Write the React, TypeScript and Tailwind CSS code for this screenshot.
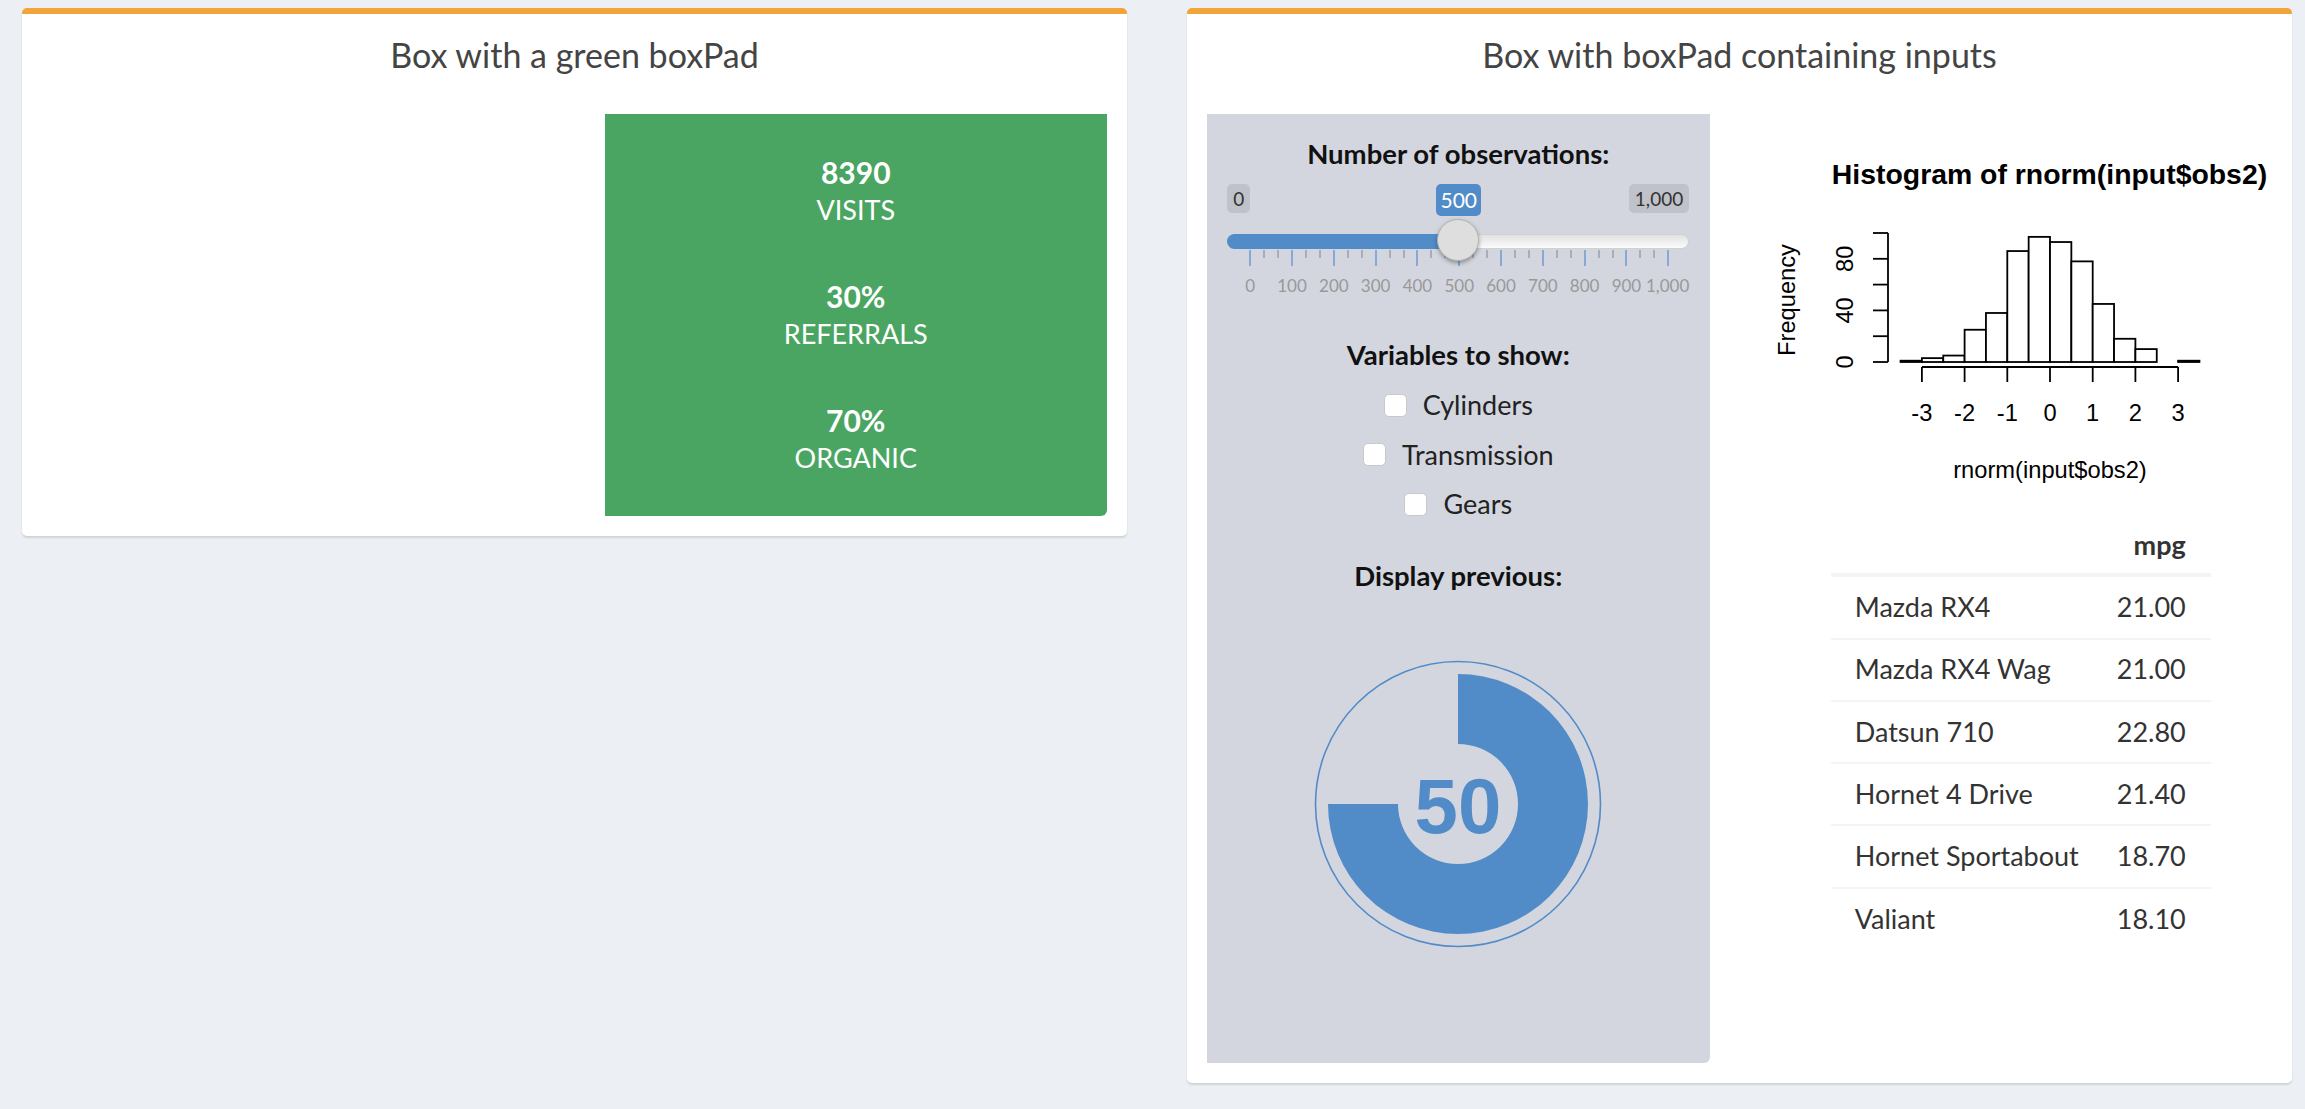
import React from "react";

const BLUE = "#528cc8";

const stats = [
  { v: "8390", l: "Visits" },
  { v: "30%", l: "Referrals" },
  { v: "70%", l: "Organic" },
];

const rows: [string, string][] = [
  ["Mazda RX4", "21.00"],
  ["Mazda RX4 Wag", "21.00"],
  ["Datsun 710", "22.80"],
  ["Hornet 4 Drive", "21.40"],
  ["Hornet Sportabout", "18.70"],
  ["Valiant", "18.10"],
];

const counts = [1, 3, 5, 25, 38, 86, 97, 93, 78, 45, 18, 10, 0, 1];

function Slider() {
  const x0 = 23;
  const step = 41.8;
  const majors = Array.from({ length: 11 }, (_, i) => i);
  const minors: number[] = [];
  for (let i = 0; i < 10; i++) {
    minors.push(x0 + i * step + step / 3, x0 + i * step + (2 * step) / 3);
  }
  return (
    <div className="relative w-[462px] h-[136px] shrink-0">
      <div className="absolute left-0 top-[10px] h-[29px] px-[6px] rounded-[5px] bg-[#bfc2c9] text-[#333] text-[19px] leading-[29px]">0</div>
      <div className="absolute left-[209px] top-[10px] h-[32px] w-[45px] rounded-[5px] bg-[#528cc8] text-white text-[21px] leading-[32px] text-center">500</div>
      <div className="absolute right-0 top-[10px] h-[29px] px-[6px] rounded-[5px] bg-[#bfc2c9] text-[#333] text-[19px] leading-[29px]">1,000</div>
      <div className="absolute left-0 right-0 top-[60px] h-[15px] rounded-full bg-gradient-to-b from-[#e2e2e2] to-[#fbfbfb] border border-[#d0d0d0]" />
      <div className="absolute left-0 w-[232px] top-[60px] h-[15px] rounded-l-full bg-[#528cc8]" />
      {minors.map((x, i) => (
        <div key={"m" + i} className="absolute top-[76px] h-[8px] w-[2px] bg-[#a9adb6]" style={{ left: x - 1 }} />
      ))}
      {majors.map((i) => (
        <div key={"M" + i} className="absolute top-[76px] h-[16px] w-[2px] bg-[#86a9d6]" style={{ left: x0 + i * step - 1 }} />
      ))}
      {majors.map((i) =>
        i === 10 ? (
          <div key={"t" + i} className="absolute right-0 top-[100px] text-[17px] leading-[24px] text-[#999]">1,000</div>
        ) : (
          <div key={"t" + i} className="absolute top-[100px] w-[60px] -ml-[30px] text-center text-[17px] leading-[24px] text-[#999]" style={{ left: x0 + i * step }}>
            {i * 100}
          </div>
        )
      )}
      <div className="absolute left-[210px] top-[45px] w-[42px] h-[42px] rounded-full bg-[#dedede] border border-[#b5b5b5] shadow-[0_2px_4px_rgba(0,0,0,0.35)]" />
    </div>
  );
}

function CheckRow({ label }: { label: string }) {
  return (
    <div className="h-[49.5px] flex items-center justify-center gap-[16px]">
      <div className="w-[23px] h-[23px] rounded-[5px] bg-white border border-[#c9c9c9]" />
      <span className="text-[27px] text-[#222]">{label}</span>
    </div>
  );
}

function Knob() {
  const c = 145;
  return (
    <svg width="290" height="290" viewBox="0 0 290 290" className="shrink-0">
      <circle cx={c} cy={c} r={142.5} fill="none" stroke={BLUE} strokeWidth={1.6} />
      <path
        d={`M ${c} ${c - 130} A 130 130 0 1 1 ${c - 130} ${c} L ${c - 60} ${c} A 60 60 0 1 0 ${c} ${c - 60} Z`}
        fill={BLUE}
      />
      <text x={c} y={c + 2} textAnchor="middle" dominantBaseline="central" fontFamily="'Liberation Sans', Arial, sans-serif" fontWeight="bold" fontSize="78" fill={BLUE}>
        50
      </text>
    </svg>
  );
}

function Histogram() {
  const X = (v: number) => 280 + v * 42.7;
  const Y = (n: number) => 248 - n * 1.29;
  const ff = "'Liberation Sans', Arial, sans-serif";
  return (
    <svg width="502" height="403" viewBox="0 0 502 403" className="block">
      <text x={279.5} y={70} textAnchor="middle" fontFamily={ff} fontWeight="bold" fontSize="28.4" fill="#000">
        Histogram of rnorm(input$obs2)
      </text>
      {counts.map((n, i) => {
        const a = -3.5 + i * 0.5;
        if (n === 0) return null;
        return (
          <rect key={i} x={X(a)} y={Y(n)} width={42.7 / 2} height={248 - Y(n)} fill="#fff" stroke="#000" strokeWidth={1.8} />
        );
      })}
      <line x1={118} y1={Y(0)} x2={118} y2={Y(100)} stroke="#000" strokeWidth={1.8} />
      {[0, 20, 40, 60, 80, 100].map((t) => (
        <line key={t} x1={103} y1={Y(t)} x2={118} y2={Y(t)} stroke="#000" strokeWidth={1.8} />
      ))}
      {[0, 40, 80].map((t) => (
        <text key={t} x={0} y={0} transform={`translate(83 ${Y(t)}) rotate(-90)`} textAnchor="middle" fontFamily={ff} fontSize="23.7" fill="#000">
          {t}
        </text>
      ))}
      <line x1={X(-3)} y1={253} x2={X(3)} y2={253} stroke="#000" strokeWidth={1.8} />
      {[-3, -2, -1, 0, 1, 2, 3].map((t) => (
        <g key={t}>
          <line x1={X(t)} y1={253} x2={X(t)} y2={268} stroke="#000" strokeWidth={1.8} />
          <text x={X(t)} y={306.5} textAnchor="middle" fontFamily={ff} fontSize="23.7" fill="#000">
            {t}
          </text>
        </g>
      ))}
      <text x={280} y={364} textAnchor="middle" fontFamily={ff} fontSize="23.7" fill="#000">
        rnorm(input$obs2)
      </text>
      <text x={0} y={0} transform={`translate(25 186) rotate(-90)`} textAnchor="middle" fontFamily={ff} fontSize="23.7" fill="#000">
        Frequency
      </text>
    </svg>
  );
}

function Box({ title, children }: { title: string; children: React.ReactNode }) {
  return (
    <div className="w-[1105px] bg-white rounded-[5px] border-t-[6px] border-[#f0a43a] shadow-[0_2px_2px_rgba(0,0,0,0.12)]">
      <div className="h-[80px] flex items-center justify-center text-[34px] text-[#444]">{title}</div>
      <div className="px-[20px] pt-[20px] pb-[20px] grid grid-cols-2 gap-x-[60px]">{children}</div>
    </div>
  );
}

export default function App() {
  return (
    <div className="min-h-screen w-full bg-[#ecf0f5] font-['Lato',sans-serif]">
      <div className="flex items-start gap-[60px] pl-[22px] pt-[8px]">
        <Box title="Box with a green boxPad">
          <div />
          <div className="h-[402px] bg-[#4aa563] rounded-br-[6px] pt-[40px] flex flex-col items-center gap-[50px] text-white">
            {stats.map((s) => (
              <div key={s.v} className="flex flex-col items-center">
                <div className="h-[37px] leading-[37px] text-[30px] font-bold">{s.v}</div>
                <div className="h-[37px] leading-[37px] text-[27px] uppercase">{s.l}</div>
              </div>
            ))}
          </div>
        </Box>
        <Box title="Box with boxPad containing inputs">
          <div className="h-[949px] bg-[#d3d6de] rounded-br-[6px] pt-[20px] flex flex-col items-center">
            <div className="h-[40px] leading-[40px] text-[27.5px] font-bold text-[#111]">Number of observations:</div>
            <Slider />
            <div className="mt-[25px] h-[40px] leading-[40px] text-[27.5px] font-bold text-[#111]">Variables to show:</div>
            <div className="mt-[5.5px] flex flex-col">
              <CheckRow label="Cylinders" />
              <CheckRow label="Transmission" />
              <CheckRow label="Gears" />
            </div>
            <div className="mt-[27px] h-[40px] leading-[40px] text-[27.5px] font-bold text-[#111]">Display previous:</div>
            <div className="mt-[62.5px]">
              <Knob />
            </div>
          </div>
          <div className="flex flex-col items-center">
            <Histogram />
            <div className="w-[380px] text-[27px] text-[#333]">
              <div className="h-[60px] flex items-center justify-end pr-[25px] font-bold border-b-[4px] border-[#f4f4f4]">mpg</div>
              {rows.map(([n, v], i) => (
                <div key={n} className={i === 0 ? "h-[60.5px] flex items-center justify-between pl-[24px] pr-[25px]" : "h-[62.3px] flex items-center justify-between pl-[24px] pr-[25px] border-t-[2px] border-[#f4f4f4]"}>
                  <span>{n}</span>
                  <span>{v}</span>
                </div>
              ))}
            </div>
          </div>
        </Box>
      </div>
    </div>
  );
}
